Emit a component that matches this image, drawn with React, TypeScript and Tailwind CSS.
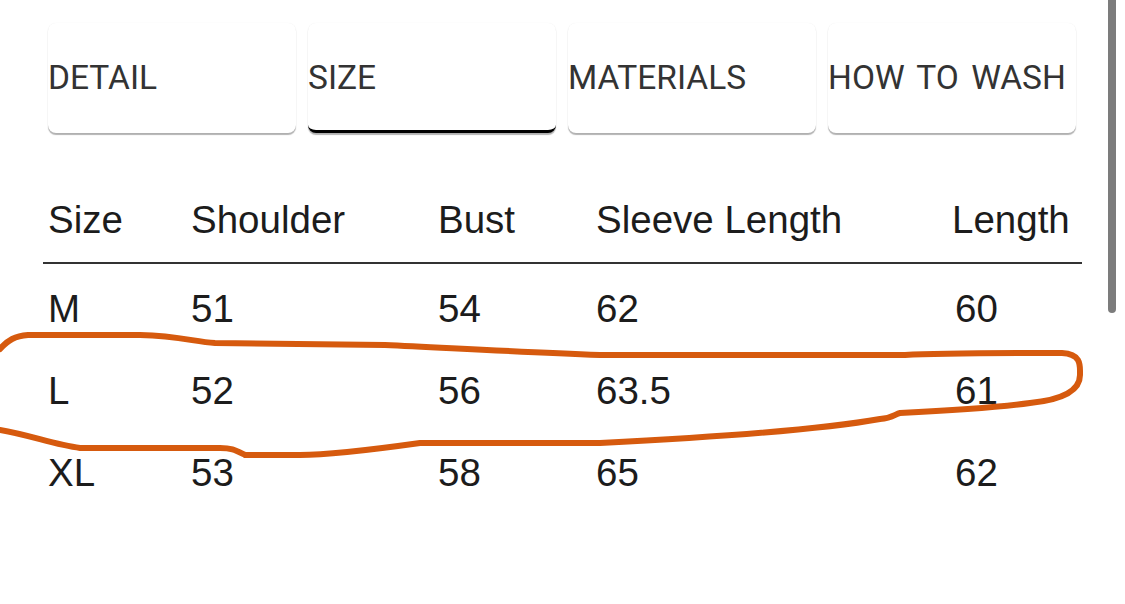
import React from "react";

const tabs = ["DETAIL", "SIZE", "MATERIALS", "HOW TO WASH"];
const headers = ["Size", "Shoulder", "Bust", "Sleeve Length", "Length"];
const rows = [
  ["M", "51", "54", "62", "60"],
  ["L", "52", "56", "63.5", "61"],
  ["XL", "53", "58", "65", "62"],
];

export default function App() {
  return (
    <div className="relative w-[1125px] h-[604px] overflow-hidden bg-white">
      <div className="flex gap-[12px] pl-[48px] pt-[23px]">
        {tabs.map((t) => (
          <div
            key={t}
            className={
              "w-[248px] h-[110px] flex items-center rounded-[8px] bg-white text-[#333333] text-[33.5px] [word-spacing:4px] shadow-[0_2px_1px_rgba(0,0,0,0.3),0_0_1px_rgba(0,0,0,0.08)] " +
              (t === "SIZE" ? "border-b-[3px] border-black" : "")
            }
            style={{ fontFamily: "Roboto, 'Noto Sans', sans-serif" }}
          >
            <span className={t === "SIZE" ? "mt-[3px]" : ""}>{t}</span>
          </div>
        ))}
      </div>

      <div
        className="ml-[43px] w-[1039px] mt-[65px] text-[#1c1c1c] text-[38.5px]"
        style={{ fontFamily: "'Liberation Sans', Arial, sans-serif" }}
      >
        <div className="grid grid-cols-[143px_247px_158px_356px_1fr] pl-[5px] leading-[44px] pb-[20px] border-b-2 border-[#333333]">
          {headers.map((h) => (
            <div key={h}>{h}</div>
          ))}
        </div>
        <div className="mt-[4px]">
          {rows.map((r) => (
            <div
              key={r[0]}
              className="grid grid-cols-[143px_247px_158px_356px_1fr] pl-[5px] leading-[82px]"
            >
              {r.map((c, i) => (
                <div key={i} className={i === 4 ? "pl-[3px]" : ""}>
                  {c}
                </div>
              ))}
            </div>
          ))}
        </div>
      </div>

      <svg
        className="absolute left-0 top-0 pointer-events-none"
        width="1125"
        height="604"
        viewBox="0 0 1125 604"
      >
        <path
          d="M0,349 C8,340 15,336 28,335 L140,335 C180,336 195,342 215,343 L385,345 C450,348 520,352 600,355 L905,355 C940,353 1000,353 1062,353 C1082,354 1080,366 1080,375 C1080,392 1060,400 1030,403 C1000,407 960,410 900,413 C895,414 893,418 880,419 C830,428 740,436 600,443 L420,443 C370,450 330,455 300,455 L245,455 C235,450 232,448 220,448 L80,448 C55,445 30,435 0,430"
          fill="none"
          stroke="#d65a0e"
          strokeWidth="6"
          strokeLinecap="round"
          strokeLinejoin="round"
        />
      </svg>

      <div className="absolute left-[1108px] top-0 w-[8px] h-[313px] bg-[#7c7c7c] rounded-b-[4px]" />
    </div>
  );
}
